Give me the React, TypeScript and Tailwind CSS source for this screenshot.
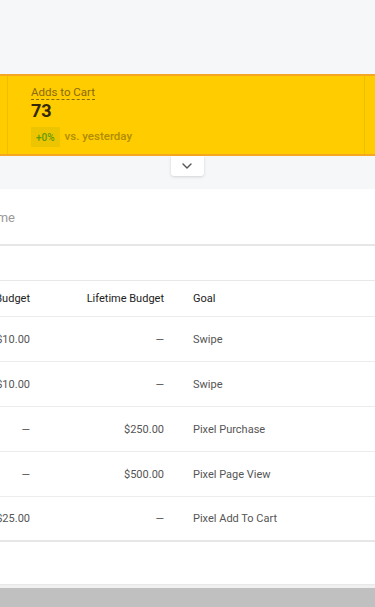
import * as React from 'react';

const rows = [
    { daily: '$10.00', lifetime: '—', goal: 'Swipe' },
    { daily: '$10.00', lifetime: '—', goal: 'Swipe' },
    { daily: '—', lifetime: '$250.00', goal: 'Pixel Purchase' },
    { daily: '—', lifetime: '$500.00', goal: 'Pixel Page View' },
    { daily: '$25.00', lifetime: '—', goal: 'Pixel Add To Cart' },
];

function ChevronDown() {
    return (
        <svg width="10" height="6" viewBox="0 0 10 6" fill="none">
            <path d="M1 1l4 4 4-4" stroke="#555" strokeWidth="1.4" strokeLinecap="round" strokeLinejoin="round" />
        </svg>
    );
}

export default function App() {
    return (
        <div className="w-[375px] h-[607px] overflow-hidden bg-[#f6f7f9] font-['Roboto',sans-serif] flex flex-col">
            <div className="h-[74px] shrink-0" />

            {/* stats band */}
            <div className="h-[82px] shrink-0 flex bg-[#ffcc00] border-y-2 border-[#f5a623]">
                <div className="w-[8px] shrink-0 border-r border-[#eebe00]" />
                <div className="flex-1 pl-[23px] pt-[9px] flex flex-col">
                    <span className="self-start text-[11.5px] leading-[14px] text-[#8a6a10] border-b border-dashed border-[#8a6a10]">Adds to Cart</span>
                    <span className="mt-[1px] text-[18px] leading-[20px] font-bold text-[#33290a]">73</span>
                    <div className="mt-[6px] flex items-center gap-[5px]">
                        <span className="h-[20px] px-[5px] flex items-center bg-[#ecc400] text-[10px] font-medium text-[#5f9a0a]">+0%</span>
                        <span className="text-[11.5px] font-medium text-[#b08c00]">vs. yesterday</span>
                    </div>
                </div>
                <div className="w-[11px] shrink-0 border-l border-[#eebe00]" />
            </div>

            <div className="h-[33px] shrink-0 flex justify-center">
                <div className="w-[33px] h-[20px] ml-[-1px] bg-white rounded-b-[3px] shadow-[0_1px_3px_rgba(0,0,0,0.15)] flex items-center justify-center">
                    <ChevronDown />
                </div>
            </div>

            {/* table panel */}
            <div className="flex-1 bg-white flex flex-col">
                <div className="h-[57px] shrink-0 flex items-center pt-[3px] border-b-2 border-[#e6e6e6]">
                    <div className="w-[15px] shrink-0 flex justify-end whitespace-nowrap text-[13px] text-[#9a9a9a]">Search by Name</div>
                </div>
                <div className="h-[35px] shrink-0 border-b border-[#e8e8e8]" />
                <div className="h-[36px] shrink-0 flex items-center pt-[2px] border-b border-[#ececec] text-[11px] text-[#222]">
                    <div className="w-[30px] shrink-0 flex justify-end whitespace-nowrap">Daily Budget</div>
                    <div className="w-[134px] shrink-0 flex justify-end whitespace-nowrap">Lifetime Budget</div>
                    <div className="ml-[29px] whitespace-nowrap">Goal</div>
                </div>
                {rows.map((row, i) => (
                    <div
                        key={i}
                        className={`h-[45px] shrink-0 flex items-center pt-[2px] text-[11px] text-[#555] ${i === rows.length - 1 ? 'border-b-2 border-[#e6e6e6]' : 'border-b border-[#ececec]'}`}
                    >
                        <div className="w-[30px] shrink-0 flex justify-end whitespace-nowrap">{row.daily}</div>
                        <div className="w-[134px] shrink-0 flex justify-end whitespace-nowrap">{row.lifetime}</div>
                        <div className="ml-[29px] whitespace-nowrap">{row.goal}</div>
                    </div>
                ))}
                <div className="h-[43px] shrink-0 border-b border-[#e8e8e8]" />
                <div className="h-[3px] shrink-0 bg-[#f0f0f0]" />
                <div className="flex-1 bg-[#c0c0c0]" />
            </div>
        </div>
    );
}
